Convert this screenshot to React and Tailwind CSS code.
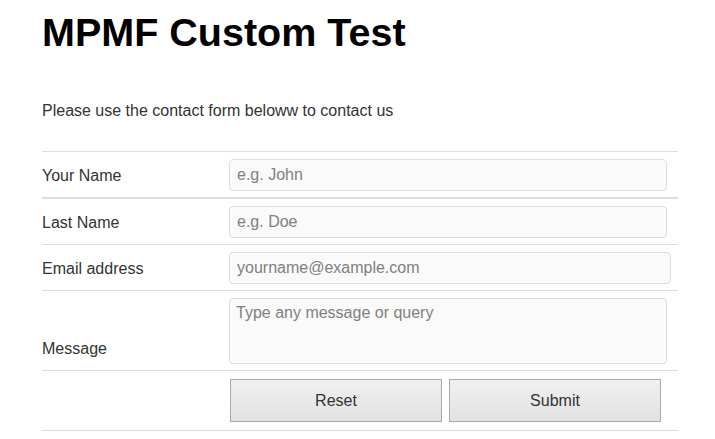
export default function App() {
  const font = { fontFamily: '"Liberation Sans", Arial, sans-serif' }
  const field =
    'h-[32px] rounded-[4px] border border-[#dddddd] bg-[#fafafa] px-[7px] text-[16px] placeholder:text-[#808080] outline-none'
  return (
    <div className="min-h-screen bg-white text-[#333]" style={font}>
      <div className="pl-[42px] w-[678px]">
        <h1 className="pt-[10px] text-[39.5px] leading-[44px] font-bold text-black">MPMF Custom Test</h1>
        <p className="mt-[47px] text-[16px] leading-[20px]">Please use the contact form beloww to contact us</p>

        <form className="mt-[30px] border-t border-[#dddddd]">
          <div className="flex items-center h-[45px]">
            <label className="w-[187px] text-[16px] pt-[2px]">Your Name</label>
            <input className={`w-[438px] ${field}`} placeholder="e.g. John" />
          </div>
          <div className="flex items-center h-[47px] border-t-2 border-[#dddddd]">
            <label className="w-[187px] text-[16px] pt-[2px]">Last Name</label>
            <input className={`w-[438px] ${field}`} placeholder="e.g. Doe" />
          </div>
          <div className="flex items-center h-[46px] border-t border-[#dddddd]">
            <label className="w-[187px] text-[16px] pt-[2px]">Email address</label>
            <input className={`w-[442px] ${field}`} placeholder="yourname@example.com" />
          </div>
          <div className="flex h-[80px] border-t border-[#dddddd]">
            <label className="w-[187px] text-[16px] leading-[20px] self-end pb-[11px]">Message</label>
            <textarea
              className="mt-[7px] w-[438px] h-[66px] rounded-[4px] border border-[#dddddd] bg-[#fafafa] px-[6px] py-[4px] text-[16px] leading-[20px] placeholder:text-[#808080] outline-none resize-none"
              placeholder="Type any message or query"
            />
          </div>
          <div className="flex items-center h-[61px] border-t border-b border-[#dddddd]">
            <div className="w-[188px]" />
            <div className="flex gap-[7px]">
              <button
                type="button"
                className="w-[212px] h-[43px] border border-[#a9a9a9] bg-gradient-to-b from-[#f0f0f0] to-[#e2e2e2] text-[16px] text-[#333]"
              >
                Reset
              </button>
              <button
                type="button"
                className="w-[212px] h-[43px] border border-[#a9a9a9] bg-gradient-to-b from-[#f0f0f0] to-[#e2e2e2] text-[16px] text-[#333]"
              >
                Submit
              </button>
            </div>
          </div>
        </form>
      </div>
    </div>
  )
}
